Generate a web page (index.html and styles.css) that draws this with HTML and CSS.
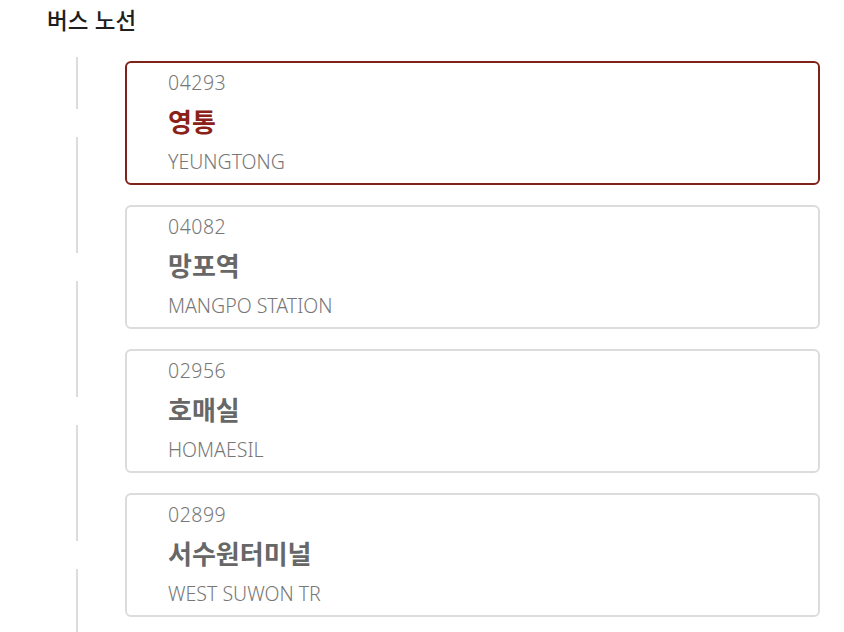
FILE: index.html
```html
<!DOCTYPE html>
<html lang="ko">
<head>
<meta charset="utf-8">
<title>버스 노선</title>
<link rel="stylesheet" href="styles.css">
</head>
<body>
<main class="page">
  <h1 class="title">버스 노선</h1>
  <ol class="stops">
    <li class="stop">
      <div class="rail"><span class="seg seg-top"></span><span class="node"></span><span class="seg seg-bottom"></span></div>
      <div class="card card-active">
        <div class="num">04293</div>
        <div class="name">영통</div>
        <div class="en">YEUNGTONG</div>
      </div>
    </li>
    <li class="stop">
      <div class="rail"><span class="seg seg-top"></span><span class="node"></span><span class="seg seg-bottom"></span></div>
      <div class="card">
        <div class="num">04082</div>
        <div class="name">망포역</div>
        <div class="en">MANGPO STATION</div>
      </div>
    </li>
    <li class="stop">
      <div class="rail"><span class="seg seg-top"></span><span class="node"></span><span class="seg seg-bottom"></span></div>
      <div class="card">
        <div class="num">02956</div>
        <div class="name">호매실</div>
        <div class="en">HOMAESIL</div>
      </div>
    </li>
    <li class="stop">
      <div class="rail"><span class="seg seg-top"></span><span class="node"></span><span class="seg seg-bottom"></span></div>
      <div class="card">
        <div class="num">02899</div>
        <div class="name">서수원터미널</div>
        <div class="en">WEST SUWON TR</div>
      </div>
    </li>
  </ol>
</main>
</body>
</html>
```
FILE: styles.css
```css
* { box-sizing: border-box; }
html, body { margin: 0; padding: 0; background: #fff; }
body {
  font-family: "Noto Sans CJK KR", "Noto Sans", sans-serif;
  color: #222;
  width: 844px;
  height: 632px;
  overflow: hidden;
}
.page { padding: 5px 24px 0 47px; }
.title {
  margin: 0;
  font-size: 22.5px;
  line-height: 28px;
  font-weight: 500;
  color: #1e1e1e;
}
.stops {
  list-style: none;
  margin: 24px 0 0 0;
  padding: 0;
}
.stop {
  display: flex;
  align-items: stretch;
  padding: 4px 0 16px 29px;
}
.rail {
  width: 2px;
  margin: -4px 47px -16px 0;
  display: flex;
  flex-direction: column;
}
.seg { display: block; background: #dcdcdc; }
.seg-top { flex: 1 1 0; }
.seg-bottom { flex: 1 1 12px; }
.node { display: block; height: 28px; flex: none; }
.card {
  flex: 1;
  border: 2px solid #dcdcdc;
  border-radius: 6px;
  padding: 7px 40px 8px 41px;
  background: #fff;
}
.card-active { border-color: #7f2219; }
.num, .en {
  font-family: "Noto Sans", "Noto Sans CJK KR", sans-serif;
  font-weight: 300;
  font-size: 19.5px;
  line-height: 26px;
  color: #777;
}
.num { letter-spacing: 0.5px; }
.name {
  margin-top: 7px;
  font-size: 26px;
  line-height: 36px;
  font-weight: 700;
  color: #676767;
}
.card-active .name { color: #8b2219; }
.en { margin-top: 10px; }
```
